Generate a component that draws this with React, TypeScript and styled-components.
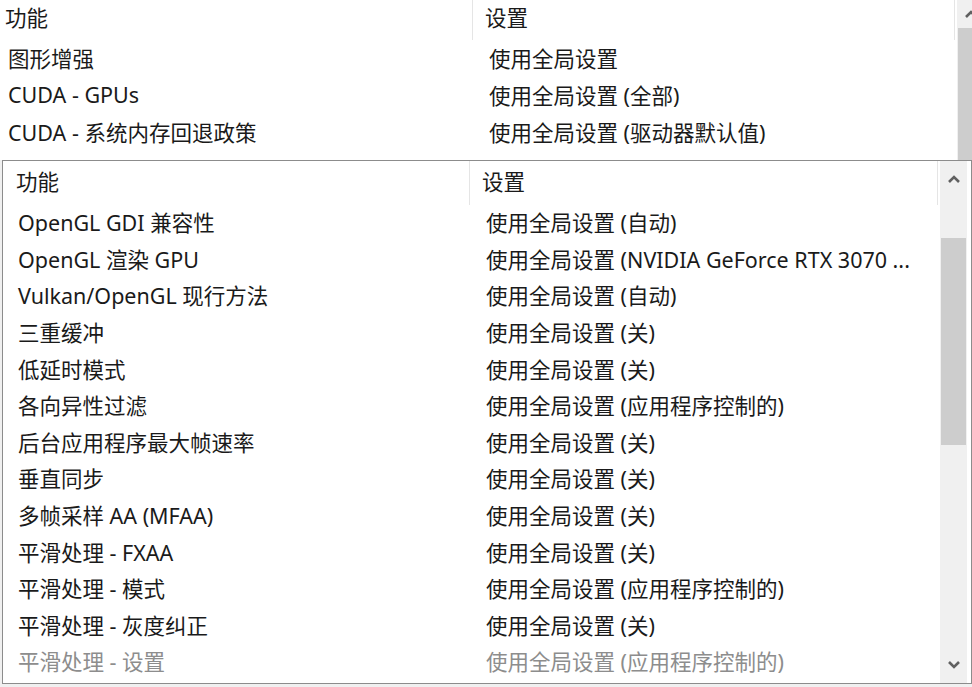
import React from "react";
import styled, { createGlobalStyle } from "styled-components";

const Global = createGlobalStyle`
  html, body { margin: 0; padding: 0; background: #f0f0f0; }
  body { overflow: hidden; font-family: "Noto Sans", "Noto Sans CJK SC", sans-serif; }
  #root { width: 972px; height: 687px; overflow: hidden; }
`;

const Page = styled.div`
  width: 972px;
  height: 687px;
  overflow: hidden;
  display: flex;
  flex-direction: column;
  background: #f0f0f0;
`;

const BackPanel = styled.div`
  width: 986px;
  height: 160px;
  flex: none;
  display: flex;
  background: #fff;
`;

const FrontPanel = styled.div`
  margin-left: 2px;
  width: 970px;
  height: 524px;
  flex: none;
  box-sizing: border-box;
  border: 1px solid #8c8c8c;
  background: #fff;
  display: flex;
  gap: 2px;
  padding-right: 3px;
`;

const Content = styled.div<{ $w: number }>`
  width: ${(p) => p.$w}px;
  flex: none;
  display: flex;
  flex-direction: column;
  overflow: hidden;
`;

const Header = styled.div<{ $h: number; $col: number }>`
  height: ${(p) => p.$h}px;
  flex: none;
  display: grid;
  grid-template-columns: ${(p) => p.$col}px 1fr;
  border-right: 1px solid #e5e5e5;
`;

const HeadCell = styled.div<{ $pad: number; $lift: number; $divider?: boolean }>`
  display: flex;
  align-items: center;
  padding-left: ${(p) => p.$pad}px;
  padding-bottom: ${(p) => p.$lift}px;
  border-right: ${(p) => (p.$divider ? "1px solid #e5e5e5" : "none")};
  font-size: 21.5px;
  color: #1a1a1a;
  white-space: nowrap;
`;

const Row = styled.div<{ $h: number; $col: number }>`
  height: ${(p) => p.$h}px;
  flex: none;
  display: grid;
  grid-template-columns: ${(p) => p.$col}px 1fr;
`;

const Cell = styled.div<{ $pad: number; $muted?: boolean }>`
  display: flex;
  align-items: center;
  padding-left: ${(p) => p.$pad}px;
  padding-bottom: 3px;
  font-size: 21.5px;
  color: ${(p) => (p.$muted ? "#8d8d8d" : "#1a1a1a")};
  white-space: nowrap;
  overflow: hidden;
`;

const Scrollbar = styled.div<{ $w: number }>`
  width: ${(p) => p.$w}px;
  flex: none;
  background: #f0f0f0;
  display: flex;
  flex-direction: column;
`;

const ArrowBtn = styled.div<{ $h: number }>`
  height: ${(p) => p.$h}px;
  flex: none;
  display: flex;
  align-items: center;
  justify-content: center;
`;

const Track = styled.div`
  flex: 1;
  display: flex;
  flex-direction: column;
`;

const Thumb = styled.div<{ $top: number; $h: number; $inset: number }>`
  margin-top: ${(p) => p.$top}px;
  margin-left: ${(p) => p.$inset}px;
  margin-right: ${(p) => p.$inset}px;
  height: ${(p) => p.$h}px;
  background: #cdcdcd;
`;

const Chevron = ({ up }: { up?: boolean }) => (
  <svg width="14" height="10" viewBox="0 0 14 10">
    <polyline
      points={up ? "2,8 7,3 12,8" : "2,2 7,7 12,2"}
      fill="none"
      stroke="#606060"
      strokeWidth="2.6"
      strokeLinejoin="miter"
    />
  </svg>
);

const backRows: [string, string][] = [
  ["图形增强", "使用全局设置"],
  ["CUDA - GPUs", "使用全局设置 (全部)"],
  ["CUDA - 系统内存回退政策", "使用全局设置 (驱动器默认值)"],
];

const frontRows: [string, string, boolean?][] = [
  ["OpenGL GDI 兼容性", "使用全局设置 (自动)"],
  ["OpenGL 渲染 GPU", "使用全局设置 (NVIDIA GeForce RTX 3070 ..."],
  ["Vulkan/OpenGL 现行方法", "使用全局设置 (自动)"],
  ["三重缓冲", "使用全局设置 (关)"],
  ["低延时模式", "使用全局设置 (关)"],
  ["各向异性过滤", "使用全局设置 (应用程序控制的)"],
  ["后台应用程序最大帧速率", "使用全局设置 (关)"],
  ["垂直同步", "使用全局设置 (关)"],
  ["多帧采样 AA (MFAA)", "使用全局设置 (关)"],
  ["平滑处理 - FXAA", "使用全局设置 (关)"],
  ["平滑处理 - 模式", "使用全局设置 (应用程序控制的)"],
  ["平滑处理 - 灰度纠正", "使用全局设置 (关)"],
  ["平滑处理 - 设置", "使用全局设置 (应用程序控制的)", true],
];

export default function App() {
  return (
    <>
      <Global />
      <Page>
        <BackPanel>
          <Content $w={955}>
            <Header $h={40} $col={473}>
              <HeadCell $pad={5} $lift={7} $divider>功能</HeadCell>
              <HeadCell $pad={12} $lift={7}>设置</HeadCell>
            </Header>
            {backRows.map(([a, b]) => (
              <Row key={a} $h={37} $col={473}>
                <Cell $pad={8}>{a}</Cell>
                <Cell $pad={16}>{b}</Cell>
              </Row>
            ))}
          </Content>
          <Scrollbar $w={28} style={{ marginLeft: 2 }}>
            <ArrowBtn $h={28}>
              <Chevron up />
            </ArrowBtn>
            <Track>
              <Thumb $top={0} $h={200} $inset={1} />
            </Track>
          </Scrollbar>
        </BackPanel>
        <FrontPanel>
          <Content $w={935}>
            <Header $h={44} $col={467}>
              <HeadCell $pad={13} $lift={5} $divider>功能</HeadCell>
              <HeadCell $pad={12} $lift={5}>设置</HeadCell>
            </Header>
            {frontRows.map(([a, b, muted]) => (
              <Row key={a} $h={36.6} $col={467}>
                <Cell $pad={15} $muted={muted}>{a}</Cell>
                <Cell $pad={16} $muted={muted}>{b}</Cell>
              </Row>
            ))}
          </Content>
          <Scrollbar $w={27}>
            <ArrowBtn $h={36}>
              <Chevron up />
            </ArrowBtn>
            <Track>
              <Thumb $top={41} $h={207} $inset={1} />
            </Track>
            <ArrowBtn $h={36}>
              <Chevron />
            </ArrowBtn>
          </Scrollbar>
        </FrontPanel>
      </Page>
    </>
  );
}
